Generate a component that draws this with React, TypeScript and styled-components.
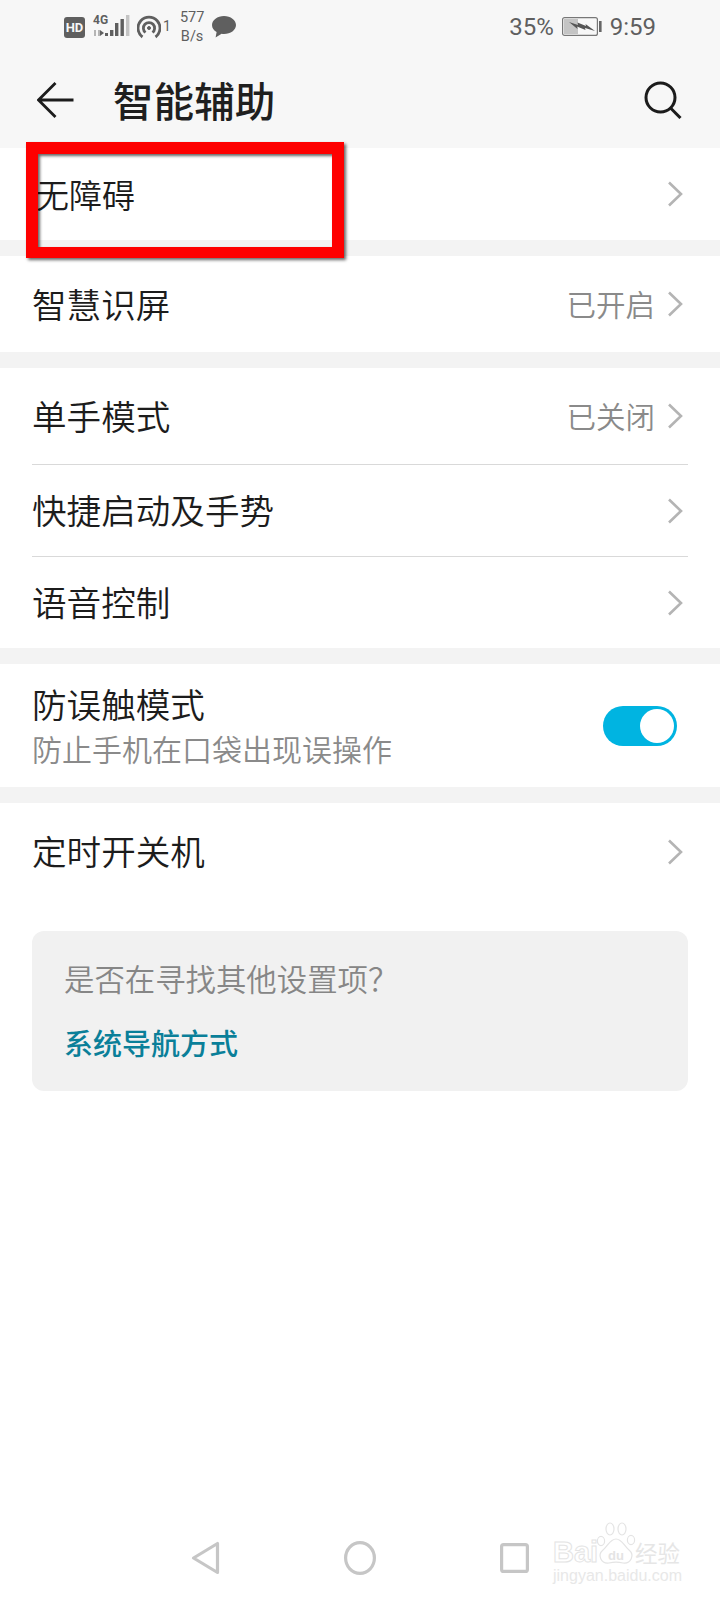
import React from "react";
import styled, { createGlobalStyle } from "styled-components";

const GlobalStyle = createGlobalStyle`
  html, body { margin: 0; padding: 0; background: #fff; }
  body { font-family: "Noto Sans CJK SC", "Noto Sans", sans-serif; }
`;

const Page = styled.div`
  position: relative;
  width: 720px;
  height: 1600px;
  overflow: hidden;
  display: flex;
  flex-direction: column;
  background: #fff;
`;

const TopArea = styled.div`
  background: #f7f7f7;
  height: 148px;
  display: flex;
  flex-direction: column;
`;

const StatusBar = styled.div`
  height: 54px;
  display: flex;
  align-items: center;
  padding: 0 64px 0 64px;
  color: #5f5f5f;
  font-family: "Roboto", "Liberation Sans", sans-serif;
`;

const StatusLeft = styled.div`
  display: flex;
  align-items: center;
  flex: 1;
`;

const HdBadge = styled.span`
  width: 21px;
  height: 21px;
  border-radius: 3px;
  background: #5f5f5f;
  color: #f7f7f7;
  font-size: 13px;
  font-weight: 700;
  line-height: 21px;
  text-align: center;
  margin-right: 7px;
`;

const SignalBox = styled.div`
  position: relative;
  width: 38px;
  height: 24px;
  margin-right: 7px;
`;

const TinyLabel = styled.span`
  position: absolute;
  left: 1px;
  top: 0;
  font-family: "Liberation Sans Narrow", "Roboto", sans-serif;
  font-size: 12px;
  line-height: 11px;
  font-weight: 700;
`;

const HotspotCount = styled.span`
  font-size: 14px;
  line-height: 13px;
  align-self: flex-start;
  margin: 12px 9px 0 2px;
`;

const Speed = styled.div`
  font-size: 14.5px;
  line-height: 19px;
  text-align: center;
  margin-right: 8px;
`;

const StatusRight = styled.div`
  display: flex;
  align-items: center;
  gap: 8px;
  font-size: 24px;
`;

const Header = styled.div`
  flex: 1;
  display: flex;
  align-items: center;
  padding: 0 38px 2px 37px;
`;

const Title = styled.h1`
  flex: 1;
  margin: 0 0 0 39px;
  font-size: 40.6px;
  line-height: 56px;
  font-weight: 500;
  color: #1f1f1f;
`;

const Gap = styled.div`
  height: 16px;
  background: #f3f3f3;
`;

const Row = styled.div<{ $h: number }>`
  height: ${(p) => p.$h}px;
  display: flex;
  align-items: center;
  padding: 0 37px 0 32px;
  background: #fff;
`;

const Divider = styled.div`
  height: 1px;
  margin: 0 32px;
  background: #d9d9d9;
`;

const Label = styled.div`
  flex: 1;
  padding-bottom: 3px;
  font-size: 34.6px;
  font-weight: 350;
  line-height: 46px;
  color: #1c1c1c;
`;

const FirstLabel = styled(Label)`
  font-size: 33px;
  padding: 0 0 0 4px;
`;

const SubLabel = styled.div`
  margin-top: 1px;
  font-size: 30px;
  line-height: 42px;
  color: #8a8a8a;
`;

const Value = styled.span`
  padding-bottom: 3px;
  font-size: 29.5px;
  font-weight: 350;
  color: #8a8a8a;
  margin-right: 12px;
`;

const Switch = styled.div`
  width: 74px;
  height: 40px;
  border-radius: 20px;
  background: #00b4e1;
  display: flex;
  justify-content: flex-end;
  align-items: center;
  padding-right: 3px;
  box-sizing: border-box;
  margin-right: 6px;
`;

const Knob = styled.div`
  width: 34px;
  height: 34px;
  border-radius: 50%;
  background: #fff;
`;

const TipCard = styled.div`
  margin: 31px 32px 0;
  height: 160px;
  box-sizing: border-box;
  padding: 25px 32px 0;
  border-radius: 12px;
  background: #f1f1f1;
`;

const TipText = styled.div`
  font-size: 30.4px;
  font-weight: 350;
  line-height: 44px;
  color: #868686;
`;

const TipLink = styled.div`
  margin-top: 20px;
  font-size: 29px;
  line-height: 44px;
  font-weight: 500;
  color: #0a7f99;
`;

const NavBar = styled.div`
  margin-top: auto;
  height: 60px;
  padding-bottom: 12px;
  display: flex;
  justify-content: center;
  align-items: center;
  gap: 124px;
`;

const Highlight = styled.div`
  position: absolute;
  left: 26px;
  top: 142px;
  width: 318px;
  height: 116px;
  box-sizing: border-box;
  border: 12px solid #fe0000;
  border-bottom-width: 11px;
  box-shadow: 2px 2px 3px rgba(0, 0, 0, 0.6), inset 2px 2px 3px rgba(0, 0, 0, 0.6);
`;

const Watermark = styled.div`
  position: absolute;
  left: 553px;
  top: 1522px;
  width: 128px;
  height: 62px;
  color: #fff;
  font-family: "Liberation Sans", sans-serif;
`;

const MarkBai = styled.span`
  position: absolute;
  left: 0;
  top: 14px;
  font-size: 29px;
  line-height: 32px;
  font-weight: 700;
  -webkit-text-stroke: 1px #e4e4e4;
`;

const MarkDu = styled.span`
  position: absolute;
  left: 55px;
  top: 27px;
  font-size: 13px;
  line-height: 14px;
  font-weight: 700;
  color: #e4e4e4;
`;

const MarkCn = styled.span`
  position: absolute;
  left: 82px;
  top: 15px;
  font-family: "Noto Sans CJK SC", sans-serif;
  font-size: 22.5px;
  line-height: 30px;
  color: #e6e6e6;
`;

const MarkUrl = styled.div`
  position: absolute;
  left: 0;
  bottom: 0;
  font-size: 16px;
  line-height: 17px;
  white-space: nowrap;
  color: #e8e8e8;
`;

const MarkPaw = styled.svg`
  position: absolute;
  left: 43px;
  top: 0;
`;

const Chevron = () => (
  <svg width="16" height="26" viewBox="0 0 16 26" fill="none">
    <path d="M2 1.5 L14 13 L2 24.5" stroke="#b4b4b4" strokeWidth="2.6" />
  </svg>
);

const BackArrow = () => (
  <svg width="37" height="36" viewBox="0 0 37 36" fill="none">
    <path d="M36.5 18 H2 M18.5 1 L1.5 18 L18.5 35" stroke="#1c1c1c" strokeWidth="2.8" />
  </svg>
);

const SearchIcon = () => (
  <svg width="38" height="38" viewBox="0 0 38 38" fill="none">
    <circle cx="16.5" cy="16.5" r="14.5" stroke="#1c1c1c" strokeWidth="3" />
    <path d="M26.5 27 L36.5 37" stroke="#1c1c1c" strokeWidth="3" />
  </svg>
);

const SignalIcon = () => (
  <svg width="38" height="24" viewBox="0 0 38 24">
    <path d="M2 15h2v6H2z" fill="#b5b5b5" />
    <path d="M6 15h2v6H6z" fill="#b5b5b5" />
    <path d="M8 15l4 3-4 3z" fill="#5f5f5f" />
    <rect x="13" y="18" width="3" height="3" fill="#5f5f5f" />
    <rect x="18" y="15" width="3.4" height="6" fill="#5f5f5f" />
    <rect x="23" y="8" width="3.4" height="13" fill="#5f5f5f" />
    <rect x="28.5" y="4" width="3.4" height="17" fill="#5f5f5f" />
    <rect x="34" y="0" width="3.4" height="21" fill="#c4c4c4" />
  </svg>
);

const HotspotIcon = () => (
  <svg width="24" height="24" viewBox="0 0 24 24" fill="none" stroke="#5f5f5f" strokeWidth="2.8">
    <path d="M5.5 22 A11 11 0 1 1 18.5 22" />
    <path d="M8.5 17.5 A5.6 5.6 0 1 1 15.5 17.5" />
    <circle cx="12" cy="13" r="1.5" fill="#5f5f5f" strokeWidth="1" />
  </svg>
);

const BubbleIcon = () => (
  <svg width="24" height="22" viewBox="0 0 24 22">
    <path d="M12 0C5.4 0 0 4 0 9c0 3 1.8 5.4 4.6 7L3.6 21.5 9.6 17.8C10.4 17.9 11.2 18 12 18c6.6 0 12-4 12-9S18.6 0 12 0z" fill="#5f5f5f" />
  </svg>
);

const BatteryIcon = () => (
  <svg width="40" height="20" viewBox="0 0 40 20">
    <rect x="0.6" y="0.6" width="34.8" height="17.8" rx="2" fill="none" stroke="#777" strokeWidth="1.2" />
    <rect x="2" y="2" width="14" height="15" fill="#c4c4c4" />
    <path d="M7 5 L16 8 L15.5 5.5 L24 9 L23.5 7 L33 14 L23 11 L23.5 13 L15 9.5 L15.5 12 Z" fill="#555" />
    <rect x="37" y="4" width="2.6" height="11" fill="#666" />
  </svg>
);

const TriangleIcon = () => (
  <svg width="29" height="34" viewBox="0 0 29 34" fill="none">
    <path d="M26.5 2.5 V31.5 L2.5 17 Z" stroke="#c6c6c6" strokeWidth="3.2" strokeLinejoin="round" />
  </svg>
);

const CircleIcon = () => (
  <svg width="32" height="34" viewBox="0 0 32 34" fill="none">
    <ellipse cx="16" cy="17" rx="14.4" ry="15.4" stroke="#c6c6c6" strokeWidth="3.2" />
  </svg>
);

const SquareIcon = () => (
  <svg width="29" height="30" viewBox="0 0 29 30" fill="none">
    <rect x="1.6" y="1.6" width="25.8" height="26.8" rx="2" stroke="#c6c6c6" strokeWidth="3.2" />
  </svg>
);

const PawIcon = () => (
  <MarkPaw width="40" height="46" viewBox="0 0 40 46" fill="none" stroke="#e4e4e4" strokeWidth="1.2">
    <ellipse cx="5" cy="19" rx="3.6" ry="4.6" />
    <ellipse cx="14" cy="7" rx="4" ry="6" />
    <ellipse cx="26" cy="7" rx="4" ry="6" />
    <ellipse cx="35" cy="18" rx="3.6" ry="4.6" />
    <path d="M20 17 C14 17 12 24 7 28 C1 33 5 42 13 41 C17 40 23 40 27 41 C35 42 39 33 33 28 C28 24 26 17 20 17 Z" />
  </MarkPaw>
);

const App = () => (
  <Page>
    <GlobalStyle />
    <TopArea>
      <StatusBar>
        <StatusLeft>
          <HdBadge>HD</HdBadge>
          <SignalBox>
            <TinyLabel>4G</TinyLabel>
            <SignalIcon />
          </SignalBox>
          <HotspotIcon />
          <HotspotCount>1</HotspotCount>
          <Speed>
            577
            <br />
            B/s
          </Speed>
          <BubbleIcon />
        </StatusLeft>
        <StatusRight>
          <span>35%</span>
          <BatteryIcon />
          <span>9:59</span>
        </StatusRight>
      </StatusBar>
      <Header>
        <BackArrow />
        <Title>智能辅助</Title>
        <SearchIcon />
      </Header>
    </TopArea>

    <Row $h={92}>
      <FirstLabel>无障碍</FirstLabel>
      <Chevron />
    </Row>
    <Gap />
    <Row $h={96}>
      <Label>智慧识屏</Label>
      <Value>已开启</Value>
      <Chevron />
    </Row>
    <Gap />
    <Row $h={96}>
      <Label>单手模式</Label>
      <Value>已关闭</Value>
      <Chevron />
    </Row>
    <Divider />
    <Row $h={91}>
      <Label>快捷启动及手势</Label>
      <Chevron />
    </Row>
    <Divider />
    <Row $h={91}>
      <Label>语音控制</Label>
      <Chevron />
    </Row>
    <Gap />
    <Row $h={123}>
      <Label>
        防误触模式
        <SubLabel>防止手机在口袋出现误操作</SubLabel>
      </Label>
      <Switch>
        <Knob />
      </Switch>
    </Row>
    <Gap />
    <Row $h={97}>
      <Label>定时开关机</Label>
      <Chevron />
    </Row>

    <TipCard>
      <TipText>是否在寻找其他设置项？</TipText>
      <TipLink>系统导航方式</TipLink>
    </TipCard>

    <NavBar>
      <TriangleIcon />
      <CircleIcon />
      <SquareIcon />
    </NavBar>

    <Highlight />
    <Watermark>
      <PawIcon />
      <MarkBai>Bai</MarkBai>
      <MarkDu>du</MarkDu>
      <MarkCn>经验</MarkCn>
      <MarkUrl>jingyan.baidu.com</MarkUrl>
    </Watermark>
  </Page>
);

export default App;
